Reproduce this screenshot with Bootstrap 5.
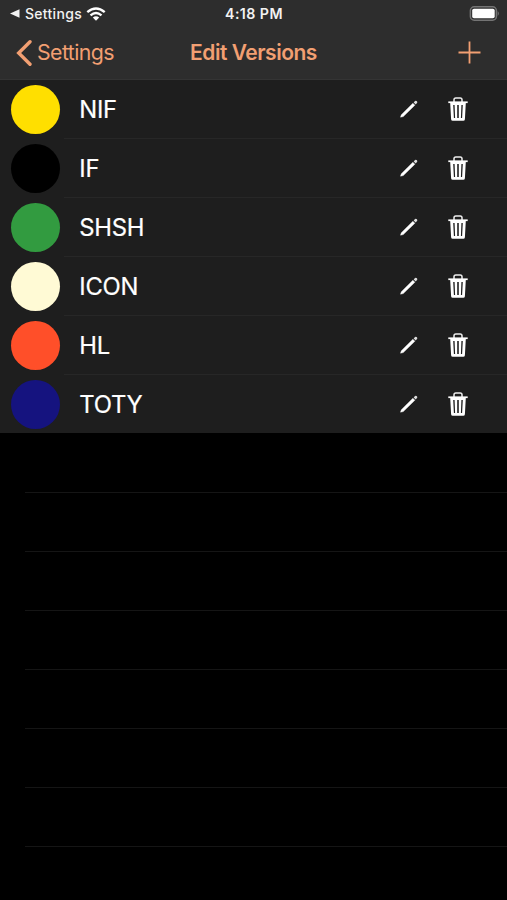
<!DOCTYPE html>
<html lang="en" data-bs-theme="dark">
<head>
<meta charset="utf-8">
<meta name="viewport" content="width=device-width, initial-scale=1">
<title>Edit Versions</title>
<link href="https://cdn.jsdelivr.net/npm/bootstrap@5.3.0/dist/css/bootstrap.min.css" rel="stylesheet">
<style>
body { background: #000; font-family: Inter, Roboto, "Liberation Sans", sans-serif; height: 900px; overflow: hidden; }
svg { display: block; flex: none; }
.top-area { height: 80px; background: #2d2d2d; border-bottom: 1px solid #343434; }
.status-bar { height: 27px; color: #f2f2f2; line-height: 27px; padding: 0 7px 0 10px; }
.status-bar .clock { font-weight: 600; font-size: 14.2px; letter-spacing: .45px; margin-right: 2px; }
.status-bar .origin { font-size: 14px; font-weight: 500; letter-spacing: .3px; margin-left: 5px; }
.side { flex: 1 1 0; }
.nav-row { height: 51px; color: #f29f72; line-height: 51px; padding: 0 26px 0 16px; }
.nav-row .back { color: inherit; font-size: 21.3px; letter-spacing: -.57px; height: 51px; }
.nav-row h1 { color: inherit; font-size: 21px; font-weight: 600; line-height: 51px; letter-spacing: -.48px; margin-left: 10px; }
.version-row { height: 59px; background: #1e1e1e; padding: 0 39px 1px 10.5px; color: #fff;
  background-image: linear-gradient(#272727, #272727); background-size: calc(100% - 64px) 1px; background-position: right bottom; background-repeat: no-repeat; }
.version-row:last-child { height: 58px; padding-bottom: 0; background-image: none; }
.swatch { width: 49px; height: 49px; }
.label { font-size: 23.8px; letter-spacing: -.2px; margin-left: 19.7px; padding-top: 2px; line-height: 1; -webkit-text-stroke: .2px #fff; }
.blank-row { height: 59px; margin-left: 25px; border-bottom: 1px solid #151515; }
ul + .blank-row { height: 60px; }
.tool { margin-left: 30px; }
</style>
<script src="https://cdn.jsdelivr.net/npm/bootstrap@5.3.0/dist/js/bootstrap.bundle.min.js"></script>
</head>
<body>
<svg width="0" height="0" class="position-absolute" aria-hidden="true">
  <symbol id="pencil" viewBox="0 0 18 18">
    <path d="M.5 17.2 1.3 14.8 12.9 3.2 14.9 5.2 3.3 16.6Z" fill="#fff" stroke="#fff" stroke-width=".4"/>
    <path d="M13.7 2.4 15 1.1Q16 .3 16.9 1.2 17.8 2.1 17 3.1L15.7 4.4Z" fill="#ddd"/>
  </symbol>
  <symbol id="trash" viewBox="0 0 20 24">
    <path d="M6 4.9V2.8Q6 1 7.8 1H12.2Q14 1 14 2.8V4.9" fill="none" stroke="#eee" stroke-width="1.5"/>
    <path d="M.3 4.4H19.7V6.1H.3Z" fill="#fff"/>
    <path fill-rule="evenodd" d="M2.2 6H17.8L16.9 22.2Q16.8 23.8 15.2 23.8H4.8Q3.2 23.8 3.1 22.2ZM5.2 8 5.9 21H7.1L6.6 8ZM9.2 8V21H10.8V8ZM13.4 8 12.9 21H14.1L14.8 8Z" fill="#fff"/>
  </symbol>
</svg>
<header class="top-area">
  <div class="status-bar d-flex align-items-center">
    <div class="side d-flex align-items-center">
      <svg width="10" height="9" viewBox="0 0 10 9"><path d="M0 4.5 9.5.3V8.7Z" fill="#f2f2f2"/></svg>
      <span class="origin">Settings</span>
      <svg class="ms-1" width="20" height="14" viewBox="0 0 20 14" fill="none" stroke="#fff" stroke-width="2.4"><path d="M1.3 5.1Q10-2.3 18.7 5.1M4.5 8.3Q10 3.7 15.5 8.3"/><path d="M6.8 10.5Q10 7.9 13.2 10.5L10 13.8Z" fill="#fff" stroke="none"/></svg>
    </div>
    <span class="clock">4:18 PM</span>
    <div class="side d-flex justify-content-end">
      <svg width="31" height="15" viewBox="0 0 31 15"><rect x="1.4" y=".8" width="26" height="13.4" rx="3.8" fill="#2d2d2d" stroke="#747474" stroke-width="1.5"/><rect x="3.2" y="2.7" width="22.5" height="9.6" rx="1.8" fill="#fff"/><path d="M28.7 5Q31 7.5 28.7 10Z" fill="#747474"/></svg>
    </div>
  </div>
  <nav class="nav-row d-flex align-items-center">
    <div class="side d-flex">
      <a class="back d-flex align-items-center text-decoration-none" href="#">
        <svg width="17" height="26" viewBox="0 0 17 26"><path d="M14 1.8 2.7 13 14 24.2" fill="none" stroke="#f29f72" stroke-width="3.4" stroke-linecap="round" stroke-linejoin="miter"/></svg>
        <span class="ms-1">Settings</span>
      </a>
    </div>
    <h1 class="mb-0">Edit Versions</h1>
    <div class="side d-flex justify-content-end">
      <svg width="23" height="23" viewBox="0 0 23 23"><path d="M11.5.5V22.5M.5 11.5H22.5" stroke="#f29f72" stroke-width="1.8"/></svg>
    </div>
  </nav>
</header>
<main>
  <ul class="list-unstyled m-0" id="versions">
    <li class="version-row d-flex align-items-center"><span class="swatch rounded-circle" style="background:#ffdf00"></span><span class="label me-auto">NIF</span><svg width="18" height="18"><use href="#pencil"/></svg><svg class="tool" width="20" height="24"><use href="#trash"/></svg></li>
    <li class="version-row d-flex align-items-center"><span class="swatch rounded-circle" style="background:#000"></span><span class="label me-auto">IF</span><svg width="18" height="18"><use href="#pencil"/></svg><svg class="tool" width="20" height="24"><use href="#trash"/></svg></li>
    <li class="version-row d-flex align-items-center"><span class="swatch rounded-circle" style="background:#329b40"></span><span class="label me-auto">SHSH</span><svg width="18" height="18"><use href="#pencil"/></svg><svg class="tool" width="20" height="24"><use href="#trash"/></svg></li>
    <li class="version-row d-flex align-items-center"><span class="swatch rounded-circle" style="background:#fffad5"></span><span class="label me-auto">ICON</span><svg width="18" height="18"><use href="#pencil"/></svg><svg class="tool" width="20" height="24"><use href="#trash"/></svg></li>
    <li class="version-row d-flex align-items-center"><span class="swatch rounded-circle" style="background:#ff4f29"></span><span class="label me-auto">HL</span><svg width="18" height="18"><use href="#pencil"/></svg><svg class="tool" width="20" height="24"><use href="#trash"/></svg></li>
    <li class="version-row d-flex align-items-center"><span class="swatch rounded-circle" style="background:#15137f"></span><span class="label me-auto">TOTY</span><svg width="18" height="18"><use href="#pencil"/></svg><svg class="tool" width="20" height="24"><use href="#trash"/></svg></li>
  </ul>
  <div class="blank-row"></div>
  <div class="blank-row"></div>
  <div class="blank-row"></div>
  <div class="blank-row"></div>
  <div class="blank-row"></div>
  <div class="blank-row"></div>
  <div class="blank-row"></div>
</main>
</body>
</html>
